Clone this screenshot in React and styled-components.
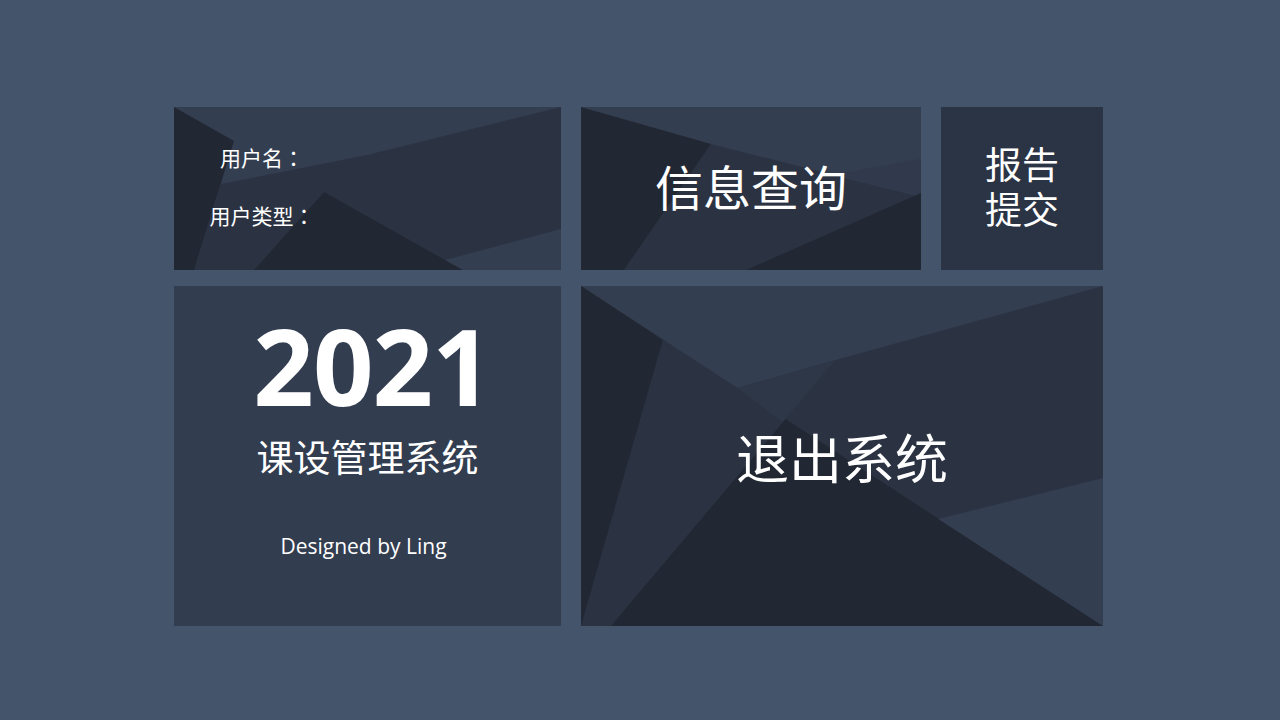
import React from 'react';
import styled, { createGlobalStyle } from 'styled-components';

const GlobalStyle = createGlobalStyle`
  html, body {
    margin: 0;
    padding: 0;
    background: #44546b;
  }
  body {
    font-family: "Noto Sans CJK SC", "Open Sans", sans-serif;
    color: #ffffff;
  }
`;

const LIGHT = '#343e51';
const MEDIUM = '#2b3343';
const DARK = '#222833';

const Page = styled.div`
  width: 1280px;
  height: 720px;
  box-sizing: border-box;
  padding: 107px 0 0 174px;
`;

const Board = styled.div`
  display: grid;
  grid-template-columns: 387px 340px 162px;
  grid-template-rows: 163px 340px;
  column-gap: 20px;
  row-gap: 16px;
`;

const Tile = styled.div`
  position: relative;
  overflow: hidden;
  box-sizing: border-box;
  background: ${(p) => p.$bg || LIGHT};
  grid-column: ${(p) => p.$span || 'auto'};
  display: flex;
  flex-direction: column;
  align-items: ${(p) => (p.$start ? 'flex-start' : 'center')};
  justify-content: ${(p) => (p.$top ? 'flex-start' : 'center')};
  padding-bottom: ${(p) => p.$lift || 0}px;
  cursor: ${(p) => (p.$click ? 'pointer' : 'default')};
`;

const Facets = styled.svg`
  position: absolute;
  inset: 0;
  width: 100%;
  height: 100%;
  z-index: 0;
`;

const Content = styled.div`
  position: relative;
  z-index: 1;
  display: flex;
  flex-direction: column;
  align-items: center;
`;

const UserInfo = styled(Content)`
  width: 176px;
  padding-top: 40px;
  gap: 37px;
`;

const Field = styled.div`
  font-size: 21px;
  line-height: 21px;
  white-space: nowrap;
`;

// centred full-width colon, as in the original
const Colon = styled.span`
  font-family: "Noto Sans CJK TC", "Noto Sans CJK SC", sans-serif;
`;

const Label = styled.div`
  font-size: ${(p) => p.$size}px;
  line-height: ${(p) => p.$lh || p.$size}px;
  text-align: center;
  white-space: nowrap;
`;

const Year = styled.div`
  font-family: "Open Sans", "Liberation Sans", sans-serif;
  font-weight: 700;
  font-size: 106px;
  line-height: 90px;
  margin-top: 34px;
  margin-left: 10px;
  letter-spacing: -1px;
`;

const Title = styled.div`
  font-size: 37px;
  line-height: 37px;
  margin-top: 28px;
`;

const Credit = styled.div`
  font-family: "Open Sans", "Liberation Sans", sans-serif;
  font-size: 21px;
  line-height: 21px;
  margin-top: 61px;
  margin-right: 8px;
`;

const Shape = ({ w, h, polys }) => (
  <Facets viewBox={`0 0 ${w} ${h}`} preserveAspectRatio="none">
    {polys.map(([fill, pts], i) => (
      <polygon key={i} fill={fill} points={pts} />
    ))}
  </Facets>
);

const userFacets = [
  [MEDIUM, '20,163 47,77 193,48 387,0 387,163'],
  [DARK, '0,0 60,34 20,163 0,163'],
  [DARK, '150,85 289,163 80,163'],
  [LIGHT, '271,153 387,122 387,163 289,163'],
];

const queryFacets = [
  [MEDIUM, '130,37 340,90 340,163 43,163'],
  ['#303a4c', '250,68 340,52 340,90'],
  [DARK, '0,0 130,37 43,163 0,163'],
  [DARK, '165,163 340,86 340,163'],
];

const exitFacets = [
  [MEDIUM, '0,0 157,102 255,74 523,0 523,340 0,340'],
  ['#2e3747', '157,102 255,74 202,136'],
  [DARK, '0,0 82,54 0,340'],
  [DARK, '205,133 523,340 30,340'],
  [LIGHT, '358,233 523,192 523,340'],
];

export default function App() {
  return (
    <>
      <GlobalStyle />
      <Page>
        <Board>
          <Tile $start $top>
            <Shape w={387} h={163} polys={userFacets} />
            <UserInfo>
              <Field>
                用户名<Colon>：</Colon>
              </Field>
              <Field>
                用户类型<Colon>：</Colon>
              </Field>
            </UserInfo>
          </Tile>

          <Tile $click $lift={8}>
            <Shape w={340} h={163} polys={queryFacets} />
            <Content>
              <Label $size={48}>信息查询</Label>
            </Content>
          </Tile>

          <Tile $bg="#2b3444" $click $lift={5}>
            <Content>
              <Label $size={37} $lh={45}>
                报告
                <br />
                提交
              </Label>
            </Content>
          </Tile>

          <Tile $bg="#323d50" $top>
            <Content>
              <Year>2021</Year>
              <Title>课设管理系统</Title>
              <Credit>Designed by Ling</Credit>
            </Content>
          </Tile>

          <Tile $span="2 / 4" $click>
            <Shape w={523} h={340} polys={exitFacets} />
            <Content>
              <Label $size={53}>退出系统</Label>
            </Content>
          </Tile>
        </Board>
      </Page>
    </>
  );
}
